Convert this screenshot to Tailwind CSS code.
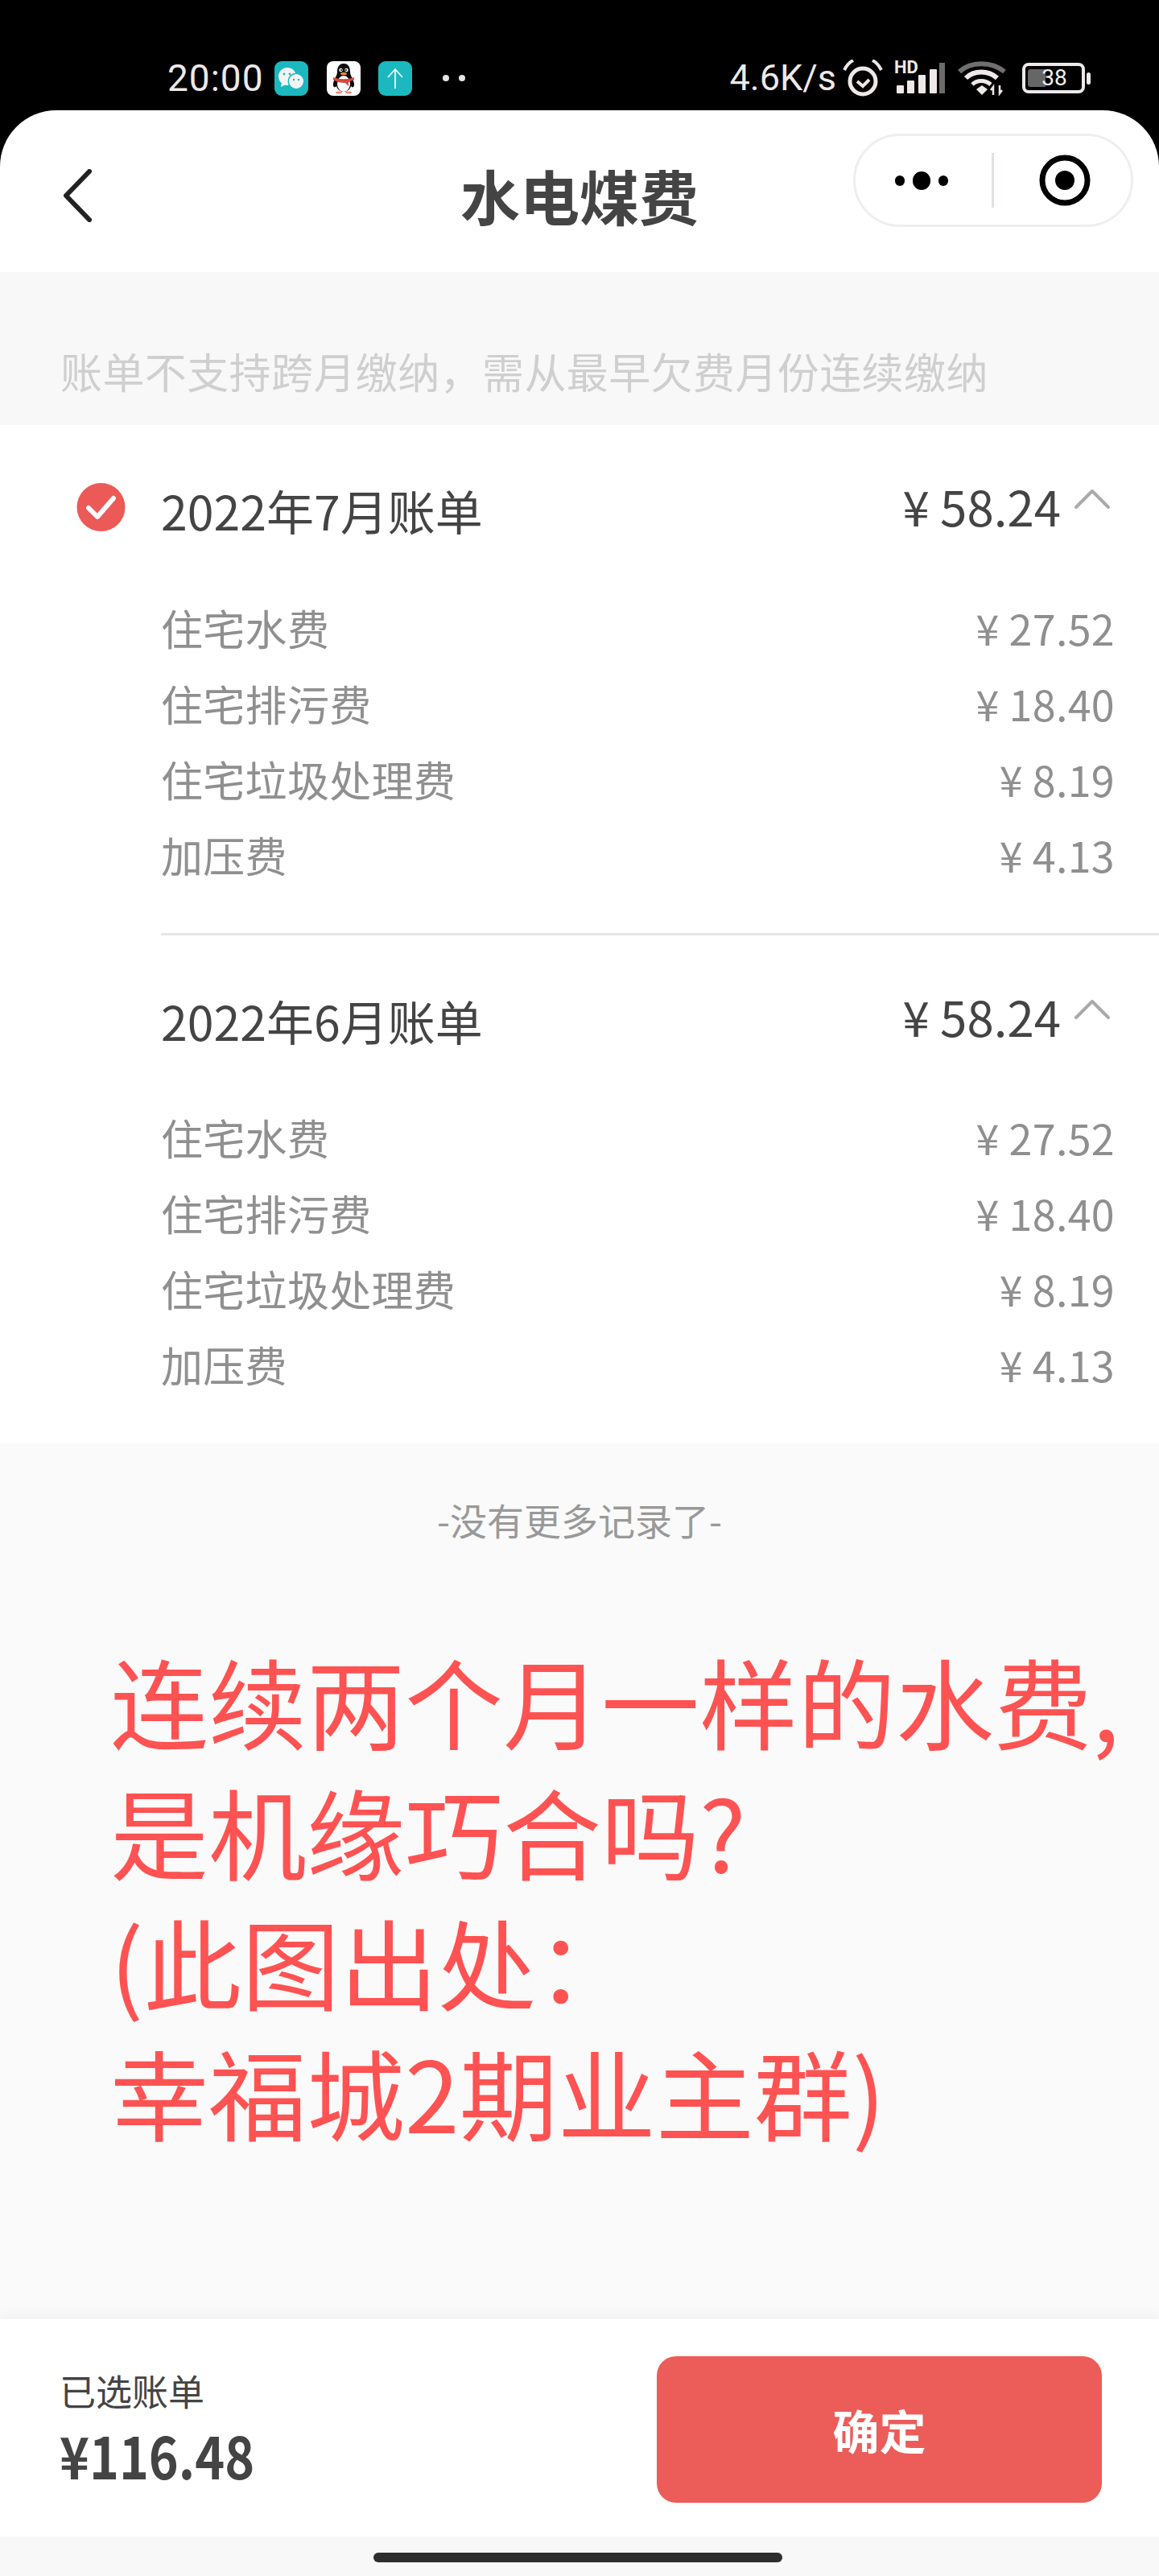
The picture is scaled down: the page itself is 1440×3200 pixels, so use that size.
<!DOCTYPE html>
<html lang="zh-CN">
<head>
<meta charset="utf-8">
<script src="https://cdn.jsdelivr.net/npm/@tailwindcss/browser@4"></script>
<title>水电煤费</title>
</head>
<body class="m-0 bg-black font-['Noto_Sans_CJK_SC',sans-serif]">
<div class="w-[1440px] h-[3200px] flex flex-col overflow-hidden bg-black">

  <!-- status bar -->
  <div class="h-[137px] shrink-0 pt-[73px] pl-[208px] pr-[85px] flex items-start justify-between text-[#eee8e8] font-['Roboto',sans-serif]">
    <div class="flex items-center h-[48px]">
      <span class="text-[46px] leading-[48px] w-[133px] tracking-[1px]">20:00</span>
      <svg class="w-[42px] h-[43px]" viewBox="0 0 42 43"><rect width="42" height="43" rx="9" fill="#1cb8c0"/><circle cx="16" cy="19" r="11" fill="#f4f4f4"/><path d="M9 27l-1 5 6-3z" fill="#f4f4f4"/><circle cx="27" cy="25" r="10.5" fill="#1cb8c0"/><circle cx="27" cy="25" r="9" fill="#f4f4f4"/><circle cx="12" cy="16" r="1.4" fill="#1cb8c0"/><circle cx="19" cy="16" r="1.4" fill="#1cb8c0"/><circle cx="24" cy="23" r="1.2" fill="#1cb8c0"/><circle cx="30" cy="23" r="1.2" fill="#1cb8c0"/></svg>
      <svg class="w-[42px] h-[43px] ml-[23px]" viewBox="0 0 42 43"><rect width="42" height="43" rx="8" fill="#fff"/><path d="M21 3c-6 0-8 5-8 10 0 3-1 5-3 9-2 4-3 8-1 10 1 1 2 0 3-1 1 4 5 7 9 7s8-3 9-7c1 1 2 2 3 1 2-2 1-6-1-10-2-4-3-6-3-9 0-5-2-10-8-10z" fill="#0a0a0a"/><ellipse cx="21" cy="28" rx="8" ry="10" fill="#fff"/><circle cx="17.5" cy="11" r="2.2" fill="#fff"/><circle cx="24.5" cy="11" r="2.2" fill="#fff"/><circle cx="18" cy="11" r="1" fill="#000"/><circle cx="24" cy="11" r="1" fill="#000"/><ellipse cx="21" cy="15.5" rx="4" ry="1.8" fill="#e8892f"/><path d="M8 20c8 3 18 3 26 0l0 3-7 3 0 5-4-4c-5 0-10-1-15-4z" fill="#d8473c"/><ellipse cx="15" cy="39" rx="4" ry="1.4" fill="#e98a7a"/><ellipse cx="27" cy="39" rx="4" ry="1.4" fill="#e98a7a"/></svg>
      <svg class="w-[42px] h-[43px] ml-[22px]" viewBox="0 0 42 43"><rect width="42" height="43" rx="9" fill="#1cb8c0"/><path d="M21 34V10M12 20l9-10 9 10" fill="none" stroke="#eafafa" stroke-width="1.8"/></svg>
      <span class="w-[8px] h-[8px] rounded-full bg-[#e8e4e4] ml-[38px]"></span>
      <span class="w-[8px] h-[8px] rounded-full bg-[#e8e4e4] ml-[12px]"></span>
    </div>
    <div class="flex items-center h-[48px]">
      <span class="text-[45px] leading-[48px] mr-[8px]">4.6K/s</span>
      <svg class="w-[52px] h-[46px]" viewBox="0 0 52 46"><circle cx="25" cy="27" r="16" fill="none" stroke="#eee8e8" stroke-width="5"/><path d="M18 27l7 6 8-8" fill="none" stroke="#eee8e8" stroke-width="4"/><path d="M2 13C5 7 9 3 13 1M48 13C45 7 41 3 37 1" fill="none" stroke="#eee8e8" stroke-width="4"/></svg>
      <div class="relative w-[64px] h-[42px] ml-[12px]">
        <span class="absolute left-0 top-[-3px] text-[22px] leading-[22px] font-bold">HD</span>
        <svg class="absolute inset-0 w-[64px] h-[42px]" viewBox="0 0 64 42"><rect x="3" y="30" width="9" height="10" rx="1" fill="#eee8e8"/><rect x="16" y="24" width="9" height="16" rx="1" fill="#eee8e8"/><rect x="30" y="17" width="9" height="23" rx="1" fill="#eee8e8"/><rect x="44" y="10" width="9" height="30" rx="1" fill="#eee8e8"/><rect x="56" y="2" width="7" height="38" fill="#6b6b6b"/></svg>
      </div>
      <svg class="w-[60px] h-[44px] ml-[15px]" viewBox="0 0 60 44"><path d="M2 14C16 1 42 1 58 14" fill="none" stroke="#6f6f6f" stroke-width="6"/><path d="M10 22C20 12 38 12 49 22" fill="none" stroke="#eee8e8" stroke-width="6"/><path d="M18 30C24 24 34 24 41 30" fill="none" stroke="#eee8e8" stroke-width="5"/><path d="M23 36l7-5 7 5-7 7z" fill="#eee8e8"/><path d="M44 43V33l-3 4M52 31v10l3-4" fill="none" stroke="#eee8e8" stroke-width="2.5"/></svg>
      <div class="relative ml-[20px] w-[78px] h-[38px] rounded-[8px] border-[4px] border-[#eee8e8] flex items-center justify-center">
        <span class="absolute left-[3px] top-[4px] bottom-[4px] w-[22px] bg-[#666] rounded-l-[3px]"></span>
        <span class="relative text-[28px] leading-[30px] text-[#f4f0f0] pl-[2px]">38</span>
      </div>
      <span class="w-[5px] h-[15px] rounded-full bg-[#eee8e8] ml-[2px]"></span>
    </div>
  </div>

  <!-- nav bar -->
  <div class="h-[201px] shrink-0 bg-white rounded-t-[70px] grid grid-cols-[1fr_auto_1fr] items-start">
    <div class="pt-[73px] pl-[78px]">
      <svg class="w-[38px] h-[66px] block" viewBox="0 0 38 66"><path d="M33 3L4 33l29 30" fill="none" stroke="#222" stroke-width="6" stroke-linecap="round" stroke-linejoin="round"/></svg>
    </div>
    <div class="pt-[58px] text-[74px] leading-[94px] font-bold text-[#444]">水电煤费</div>
    <div class="flex justify-end pt-[29px] pr-[32px]">
      <div class="w-[348px] h-[116px] rounded-full border-[3px] border-[#eeeeee] bg-white flex items-center">
        <div class="w-[172px] h-[68px] border-r-[3px] border-[#e6dfe0] flex items-center justify-center gap-[10px] pr-[6px]">
          <span class="w-[12px] h-[13px] rounded-full bg-black"></span>
          <span class="w-[22px] h-[23px] rounded-full bg-black"></span>
          <span class="w-[12px] h-[13px] rounded-full bg-black"></span>
        </div>
        <div class="flex-1 flex items-center justify-center pl-[6px]">
          <svg class="w-[64px] h-[64px]" viewBox="0 0 64 64"><circle cx="32" cy="32" r="28" fill="none" stroke="#000" stroke-width="7"/><circle cx="32" cy="32" r="12" fill="#000"/></svg>
        </div>
      </div>
    </div>
  </div>

  <!-- notice -->
  <div class="h-[190px] shrink-0 bg-[#f8f8f8] pl-[75px] pt-[93px] text-[52px] leading-[60px] tracking-[0.4px] text-[#cfcfcf] whitespace-nowrap">账单不支持跨月缴纳，需从最早欠费月份连续缴纳</div>

  <!-- bills -->
  <div class="h-[1265px] shrink-0 bg-white flex flex-col">
    <div class="flex pl-[95px]">
      <div class="w-[105px] shrink-0 pt-[72px]">
        <svg class="w-[61px] h-[60px] block" viewBox="0 0 61 60"><circle cx="30.5" cy="30" r="30" fill="#ec5a58"/><path d="M15 31l11 11 20-23" fill="none" stroke="#fff" stroke-width="6" stroke-linecap="round" stroke-linejoin="round"/></svg>
      </div>
      <div class="flex-1 border-b-[3px] border-[#e6e6e6]">
        <div class="h-[205px] flex justify-between items-start pr-[55px] text-[#444]">
          <span class="pt-[78px] text-[59px] leading-[56px]">2022年7月账单</span>
          <div class="flex items-start pt-[70px]">
            <span class="text-[60px] leading-[60px]">¥ 58.24</span>
            <svg class="w-[46px] h-[26px] ml-[16px] mt-[8px] mr-[5px] block" viewBox="0 0 46 26"><path d="M3 24L23 4l20 20" fill="none" stroke="#aaa" stroke-width="4" stroke-linecap="round" stroke-linejoin="round"/></svg>
          </div>
        </div>
        <div class="pr-[55px] pb-[50px] text-[52px] tracking-[0.3px] text-[#8f8f8f]">
          <div class="h-[94px] flex items-center justify-between"><span>住宅水费</span><span>¥ 27.52</span></div>
          <div class="h-[94px] flex items-center justify-between"><span>住宅排污费</span><span>¥ 18.40</span></div>
          <div class="h-[94px] flex items-center justify-between"><span>住宅垃圾处理费</span><span>¥ 8.19</span></div>
          <div class="h-[94px] flex items-center justify-between"><span>加压费</span><span>¥ 4.13</span></div>
        </div>
      </div>
    </div>
    <div class="flex pl-[200px]">
      <div class="flex-1">
        <div class="h-[204px] flex justify-between items-start pr-[55px] text-[#444]">
          <span class="pt-[78px] text-[59px] leading-[56px]">2022年6月账单</span>
          <div class="flex items-start pt-[70px]">
            <span class="text-[60px] leading-[60px]">¥ 58.24</span>
            <svg class="w-[46px] h-[26px] ml-[16px] mt-[8px] mr-[5px] block" viewBox="0 0 46 26"><path d="M3 24L23 4l20 20" fill="none" stroke="#aaa" stroke-width="4" stroke-linecap="round" stroke-linejoin="round"/></svg>
          </div>
        </div>
        <div class="pr-[55px] text-[52px] tracking-[0.3px] text-[#8f8f8f]">
          <div class="h-[94px] flex items-center justify-between"><span>住宅水费</span><span>¥ 27.52</span></div>
          <div class="h-[94px] flex items-center justify-between"><span>住宅排污费</span><span>¥ 18.40</span></div>
          <div class="h-[94px] flex items-center justify-between"><span>住宅垃圾处理费</span><span>¥ 8.19</span></div>
          <div class="h-[94px] flex items-center justify-between"><span>加压费</span><span>¥ 4.13</span></div>
        </div>
      </div>
    </div>
  </div>

  <!-- empty area with note -->
  <div class="h-[1088px] shrink-0 bg-[#fafafa]">
    <div class="pt-[64px] text-center text-[46px] leading-[60px] text-[#999]">-没有更多记录了-</div>
    <div class="mt-[113px] ml-[137px] text-[122px] leading-[162px] text-[#ff5252] whitespace-nowrap">
      <div>连续两个月一样的水费,</div>
      <div>是机缘巧合吗?</div>
      <div>(此图出处：</div>
      <div>幸福城2期业主群)</div>
    </div>
  </div>

  <!-- bottom bar -->
  <div class="h-[270px] shrink-0 bg-white shadow-[0_-6px_14px_rgba(0,0,0,0.04)] relative flex items-start justify-between pl-[74px] pr-[71px]">
    <div class="pt-[60px]">
      <div class="text-[45px] leading-[58px] text-[#444]">已选账单</div>
      <div class="mt-[8px] text-[72px] leading-[84px] font-bold text-[#444] origin-left scale-x-[0.87]">¥116.48</div>
    </div>
    <div class="mt-[46px] w-[553px] h-[182px] rounded-[24px] bg-[#ec5c59] flex items-center justify-center text-[58px] font-bold text-white">确定</div>
  </div>
  <div class="flex-1 bg-[#f8f8f8] pt-[20px] pr-[4px] flex justify-center items-start">
    <div class="w-[508px] h-[12px] rounded-full bg-[#2e2e2e]"></div>
  </div>
</div>
</body>
</html>
